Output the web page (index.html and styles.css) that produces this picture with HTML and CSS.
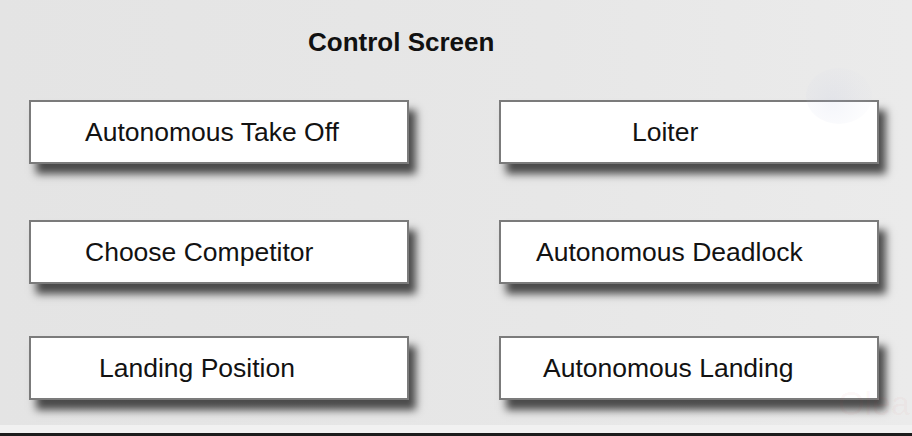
FILE: index.html
```html
<!DOCTYPE html>
<html>
<head>
<meta charset="utf-8">
<link rel="stylesheet" href="styles.css">
</head>
<body>
<div class="screen">
  <div class="watermark-circle"></div>
  <div class="watermark-text">Olea</div>
  <h1 class="title">Control Screen</h1>
  <div class="grid">
    <div class="row">
      <div class="btn pad-56">Autonomous Take Off</div>
      <div class="btn pad-133">Loiter</div>
    </div>
    <div class="row">
      <div class="btn pad-56">Choose Competitor</div>
      <div class="btn pad-37">Autonomous Deadlock</div>
    </div>
    <div class="row row-last">
      <div class="btn pad-70">Landing Position</div>
      <div class="btn pad-44">Autonomous Landing</div>
    </div>
  </div>
  <div class="bottom-strip"></div>
  <div class="bottom-bar"></div>
</div>
</body>
</html>
```
FILE: styles.css
```css
html, body {
  margin: 0;
  padding: 0;
}
body {
  width: 912px;
  height: 436px;
  overflow: hidden;
  background: #e6e6e6;
  font-family: "Liberation Sans", Arial, sans-serif;
  color: #111;
}
.screen {
  position: relative;
  width: 912px;
  height: 436px;
  display: flex;
  flex-direction: column;
  background: linear-gradient(90deg, #e4e4e4 0%, #e7e7e7 60%, #ebebeb 100%);
}
.title {
  margin: 0;
  padding: 27px 0 0 308px;
  height: 100px;
  box-sizing: border-box;
  font-size: 26px;
  line-height: 30px;
  font-weight: bold;
  letter-spacing: 0;
  color: #111;
}
.grid {
  display: flex;
  flex-direction: column;
  gap: 56px;
  padding-left: 29px;
}
.row {
  display: flex;
  gap: 90px;
}
.row-last {
  margin-top: -4px;
}
.btn {
  width: 380px;
  height: 64px;
  box-sizing: border-box;
  background: #fff;
  border: 2px solid #7b7b7b;
  box-shadow: 7px 10px 8px rgba(0, 0, 0, 0.68);
  display: flex;
  align-items: center;
  font-size: 26.5px;
  color: #121212;
}
.pad-56 { padding-left: 54px; }
.pad-133 { padding-left: 131px; }
.pad-37 { padding-left: 35px; }
.pad-70 { padding-left: 68px; }
.pad-44 { padding-left: 42px; }
.bottom-strip {
  margin-top: auto;
  height: 8px;
  background: #f1f1f1;
}
.bottom-bar {
  height: 3px;
  background: #1c1c1c;
}
.watermark-circle {
  position: absolute;
  left: 806px;
  top: 68px;
  width: 66px;
  height: 56px;
  border-radius: 50%;
  background: radial-gradient(circle at 40% 60%, rgba(180, 190, 225, 0.14), rgba(200, 205, 230, 0.06) 60%, rgba(220, 220, 235, 0) 100%);
}
.watermark-text {
  position: absolute;
  left: 838px;
  top: 384px;
  font-size: 34px;
  font-family: "Liberation Sans", Arial, sans-serif;
  color: rgba(220, 60, 60, 0.05);
}
```
